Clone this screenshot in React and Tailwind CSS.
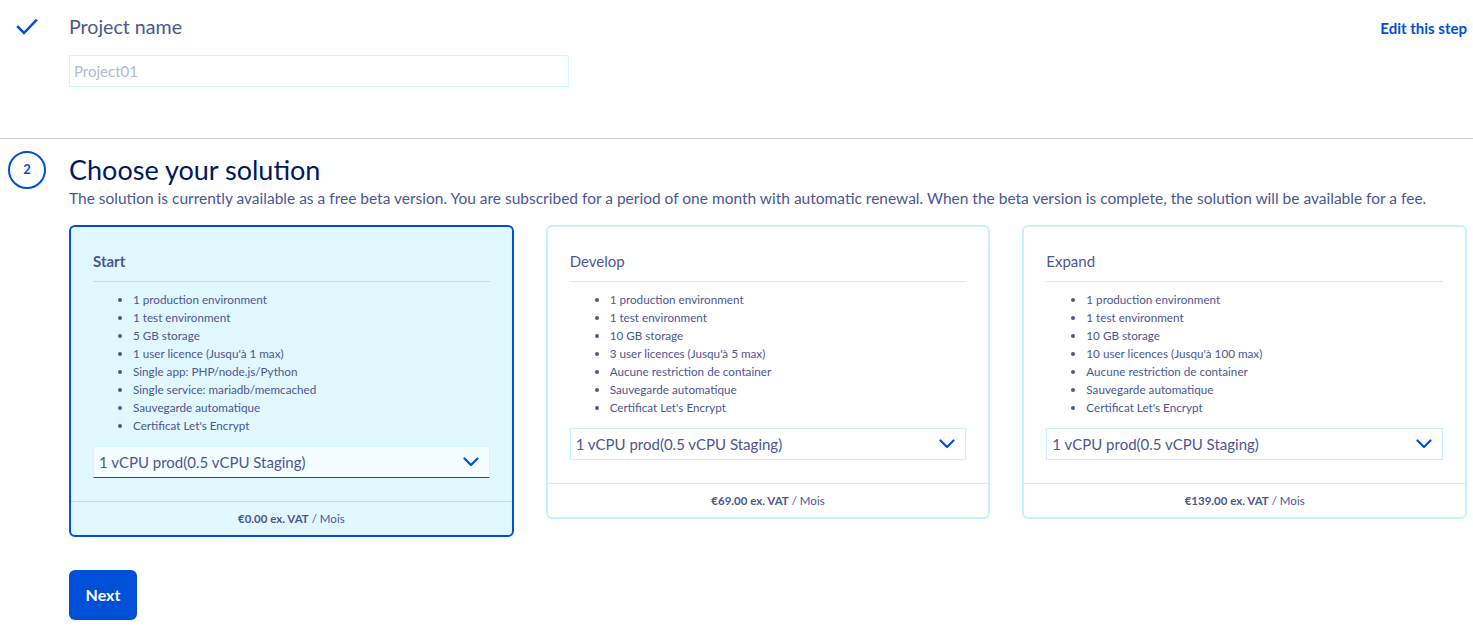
import React from "react";

const font = { fontFamily: "Lato, 'Open Sans', sans-serif" };

function Chevron() {
  return (
    <svg width="16" height="10" viewBox="0 0 16 10" fill="none">
      <path d="M1.5 1.5 L8 8 L14.5 1.5" stroke="#0050d7" strokeWidth="2.2" strokeLinecap="round" strokeLinejoin="round" />
    </svg>
  );
}

const plans = [
  {
    name: "Start",
    selected: true,
    items: [
      "1 production environment",
      "1 test environment",
      "5 GB storage",
      "1 user licence (Jusqu'à 1 max)",
      "Single app: PHP/node.js/Python",
      "Single service: mariadb/memcached",
      "Sauvegarde automatique",
      "Certificat Let's Encrypt",
    ],
    price: "€0.00 ex. VAT",
  },
  {
    name: "Develop",
    items: [
      "1 production environment",
      "1 test environment",
      "10 GB storage",
      "3 user licences (Jusqu'à 5 max)",
      "Aucune restriction de container",
      "Sauvegarde automatique",
      "Certificat Let's Encrypt",
    ],
    price: "€69.00 ex. VAT",
  },
  {
    name: "Expand",
    items: [
      "1 production environment",
      "1 test environment",
      "10 GB storage",
      "10 user licences (Jusqu'à 100 max)",
      "Aucune restriction de container",
      "Sauvegarde automatique",
      "Certificat Let's Encrypt",
    ],
    price: "€139.00 ex. VAT",
  },
];

function Card({ plan }) {
  const sel = plan.selected;
  return (
    <div
      className={
        "flex flex-col rounded-[6px] border-2 " +
        (sel ? "border-[#0050d7] bg-[#e1f8fe]" : "border-[#c6f2fd] bg-white")
      }
    >
      <div className="px-[22px] pt-[24px] pb-[23px]">
        <div
          className={
            "text-[15px] leading-[20px] text-[#4d5693] pb-[10px] border-b " +
            (sel ? "font-bold border-[#a9e9fb]" : "border-[#c6f2fd]")
          }
        >
          {plan.name}
        </div>
        <ul className="list-disc pl-[40px] mt-[8px] text-[11.7px] leading-[18px] text-[#4d5693]">
          {plan.items.map((it) => (
            <li key={it}>{it}</li>
          ))}
        </ul>
        <div
          className={
            "mt-[12px] h-[32px] flex items-center justify-between pl-[5px] pr-[10px] border " +
            (sel
              ? "bg-[#f4fdff] border-[#d4f5fe] border-b-[#0050d7]"
              : "bg-white border-[#c6f2fd]")
          }
        >
          <span className="text-[15px] text-[#4d5693]">1 vCPU prod(0.5 vCPU Staging)</span>
          <Chevron />
        </div>
      </div>
      <div
        className={
          "mt-auto border-t h-[34px] flex items-center justify-center text-[11.5px] text-[#4d5693] " +
          (sel ? "border-[#a9e9fb]" : "border-[#c6f2fd]")
        }
      >
        <span className="font-bold">{plan.price}</span>
        <span>&nbsp;/ Mois</span>
      </div>
    </div>
  );
}

export default function App() {
  return (
    <div className="bg-white w-[1473px] h-[630px] overflow-hidden" style={font}>
      {/* Step 1 */}
      <div className="flex pl-[7px] pr-[6px] pt-[13px] h-[139px] border-b border-[#cccccc]">
        <div className="w-[40px] flex justify-center pt-[5px]">
          <svg width="22" height="18" viewBox="0 0 22 18" fill="none">
            <path d="M2 9 L8 15 L20 2.5" stroke="#0050d7" strokeWidth="2.5" strokeLinecap="square" />
          </svg>
        </div>
        <div className="ml-[22px] flex-1 flex justify-between">
          <div>
            <div className="text-[19.6px] leading-[28px] text-[#4d5693]">Project name</div>
            <div className="mt-[14px] w-[500px] h-[32px] border border-[#d6f6fe] flex items-center px-[4px] text-[15px] text-[#b3b8d4]">
              Project01
            </div>
          </div>
          <div className="text-[15px] font-bold text-[#0050d7] pt-[4px]">Edit this step</div>
        </div>
      </div>

      {/* Step 2 */}
      <div className="flex pl-[8px] pr-[6px] pt-[12px]">
        <div className="w-[40px]">
          <div className="w-[38px] h-[38px] rounded-full border-2 border-[#0050d7] flex items-center justify-center text-[13px] font-bold text-[#0050d7]">
            2
          </div>
        </div>
        <div className="ml-[21px] flex-1">
          <div className="text-[27px] leading-[36px] text-[#00185e] mt-[1px]">Choose your solution</div>
          <div className="text-[15.5px] leading-[20px] text-[#4d5693]">
            The solution is currently available as a free beta version. You are subscribed for a period of one month with automatic renewal. When the beta version is complete, the solution will be available for a fee.
          </div>
          <div className="mt-[17px] grid grid-cols-3 gap-[32px] items-start">
            {plans.map((p) => (
              <Card key={p.name} plan={p} />
            ))}
          </div>
          <button className="mt-[33px] h-[50px] w-[68px] rounded-[6px] bg-[#0050d7] text-white font-bold text-[16px]">
            Next
          </button>
        </div>
      </div>
    </div>
  );
}
